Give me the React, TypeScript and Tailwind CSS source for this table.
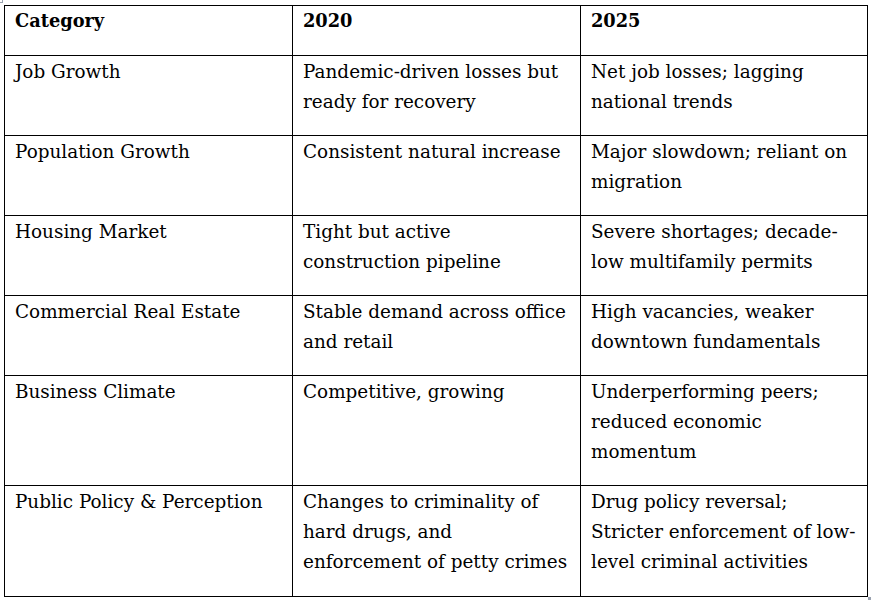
type Row = {
  category: string;
  y2020: string[];
  y2025: string[];
};

const rows: Row[] = [
  {
    category: 'Job Growth',
    y2020: ['Pandemic-driven losses but', 'ready for recovery'],
    y2025: ['Net job losses; lagging', 'national trends'],
  },
  {
    category: 'Population Growth',
    y2020: ['Consistent natural increase'],
    y2025: ['Major slowdown; reliant on', 'migration'],
  },
  {
    category: 'Housing Market',
    y2020: ['Tight but active', 'construction pipeline'],
    y2025: ['Severe shortages; decade-', 'low multifamily permits'],
  },
  {
    category: 'Commercial Real Estate',
    y2020: ['Stable demand across office', 'and retail'],
    y2025: ['High vacancies, weaker', 'downtown fundamentals'],
  },
  {
    category: 'Business Climate',
    y2020: ['Competitive, growing'],
    y2025: ['Underperforming peers;', 'reduced economic', 'momentum'],
  },
  {
    category: 'Public Policy & Perception',
    y2020: ['Changes to criminality of', 'hard drugs, and', 'enforcement of petty crimes'],
    y2025: ['Drug policy reversal;', 'Stricter enforcement of low-', 'level criminal activities'],
  },
];

function Cell({ lines, header, last }: { lines: string[]; header?: boolean; last?: boolean }) {
  return (
    <div
      className={`border-r border-b border-black pl-[10px] whitespace-nowrap leading-[30px] ${
        header ? 'pt-0 pb-[19px] font-bold text-[17.8px]' : last ? 'pt-px pb-[19px]' : 'pt-px pb-[18px]'
      }`}
    >
      {lines.map((line, i) => (
        <div key={i}>{line}</div>
      ))}
    </div>
  );
}

export default function App() {
  return (
    <div className="relative w-[871px] h-[600px] bg-white text-black overflow-hidden font-['DejaVu_Serif',serif] text-[18.4px]">
      {/* table move handle */}
      <div className="absolute left-[-1px] top-[-1px] w-[4px] h-[4px] border border-gray-400 bg-white" />

      <div className="ml-[4px] pt-[5px]">
        <div className="grid grid-cols-[288px_288px_287px] border-l border-t border-black w-[864px]">
          <Cell lines={['Category']} header />
          <Cell lines={['2020']} header />
          <Cell lines={['2025']} header />
          {rows.map((row, i) => {
            const last = i === rows.length - 1;
            return [
              <Cell key={`${i}-a`} lines={[row.category]} last={last} />,
              <Cell key={`${i}-b`} lines={row.y2020} last={last} />,
              <Cell key={`${i}-c`} lines={row.y2025} last={last} />,
            ];
          })}
        </div>
      </div>

      {/* table resize handle */}
      <div className="absolute left-[868px] top-[597px] w-[3px] h-[3px] bg-gray-400" />
    </div>
  );
}
